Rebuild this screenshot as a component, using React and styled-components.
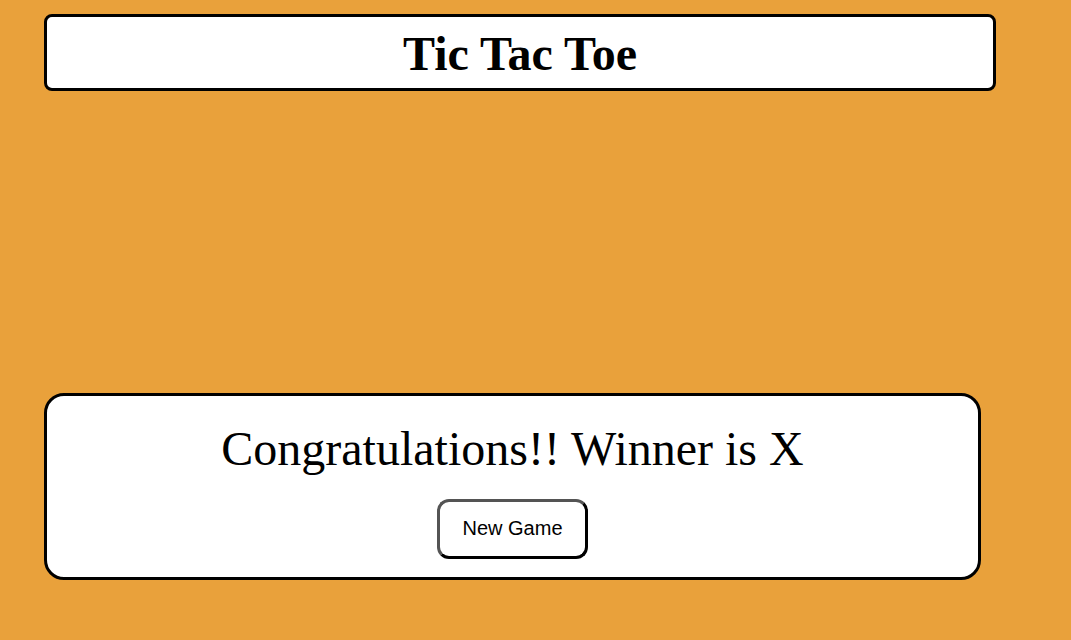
import React from "react";
import styled, { createGlobalStyle } from "styled-components";

const Global = createGlobalStyle`
  html, body {
    margin: 0;
    padding: 0;
    background: #e9a13b;
  }
  body {
    font-family: "Liberation Serif", "Times New Roman", serif;
    min-height: 640px;
  }
`;

const Page = styled.div`
  display: flex;
  flex-direction: column;
  align-items: flex-start;
  padding: 14px 0 0 44px;
`;

const Header = styled.header`
  box-sizing: border-box;
  width: 952px;
  height: 77px;
  background: #fff;
  border: 3px solid #000;
  border-radius: 8px;
  display: flex;
  align-items: center;
  justify-content: center;
  padding-top: 3px;
`;

const Title = styled.h1`
  margin: 0;
  font-family: "Liberation Serif", "Times New Roman", serif;
  font-weight: 700;
  font-size: 48px;
  line-height: 1;
  color: #000;
`;

const BoardArea = styled.div`
  height: 302px;
`;

const ResultCard = styled.section`
  box-sizing: border-box;
  width: 937px;
  height: 187px;
  background: #fff;
  border: 3px solid #000;
  border-radius: 20px;
  display: flex;
  flex-direction: column;
  align-items: center;
  padding-top: 26px;
  gap: 24px;
`;

const Message = styled.p`
  margin: 0;
  font-family: "Liberation Serif", "Times New Roman", serif;
  font-size: 48px;
  line-height: 53px;
  color: #000;
`;

const Button = styled.button`
  box-sizing: border-box;
  width: 151px;
  height: 60px;
  padding: 0 0 2px;
  background: #fff;
  border: 3px outset #000;
  border-radius: 12px;
  font-family: "Liberation Sans", Arial, sans-serif;
  font-size: 20px;
  color: #000;
  cursor: pointer;
`;

export default function App() {
  return (
    <>
      <Global />
      <Page>
        <Header>
          <Title>Tic Tac Toe</Title>
        </Header>
        <BoardArea />
        <ResultCard>
          <Message>Congratulations!! Winner is X</Message>
          <Button>New Game</Button>
        </ResultCard>
      </Page>
    </>
  );
}
